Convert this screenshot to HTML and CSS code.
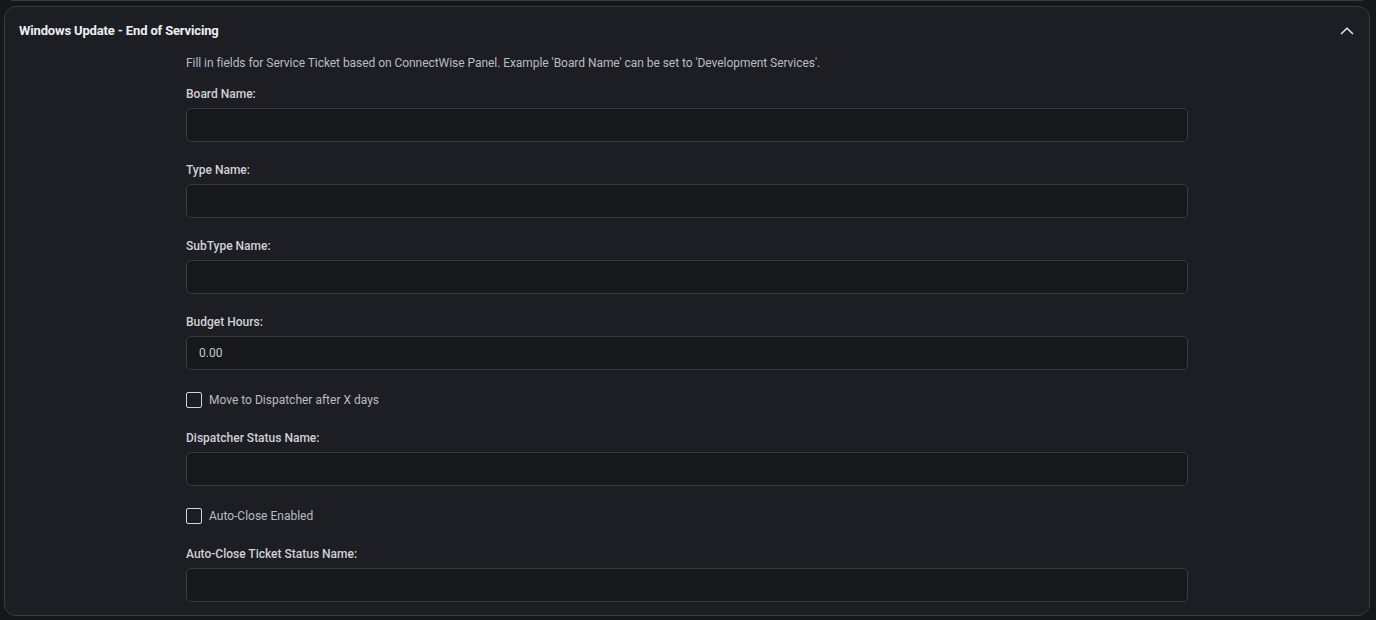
FILE: index.html
```html
<!DOCTYPE html>
<html lang="en">
<head>
    <meta charset="UTF-8">
    <meta name="viewport" content="width=device-width, initial-scale=1.0">
    <title>Windows Update - End of Servicing</title>
    <link rel="stylesheet" href="styles.css">
</head>
<body>
    <div class="panel panel-prev"></div>

    <div class="panel">
        <div class="panel-header">
            <span class="panel-title">Windows Update - End of Servicing</span>
            <svg class="chevron" width="14" height="8" viewBox="0 0 14 8">
                <path d="M1 7 L7 1.2 L13 7" fill="none" stroke="#e6ecf5" stroke-width="1.5"/>
            </svg>
        </div>
        <div class="panel-body">
            <p class="hint">Fill in fields for Service Ticket based on ConnectWise Panel. Example 'Board Name' can be set to 'Development Services'.</p>

            <div class="field">
                <label class="field-label" for="board">Board Name:</label>
                <input type="text" id="board">
            </div>
            <div class="field">
                <label class="field-label" for="type">Type Name:</label>
                <input type="text" id="type">
            </div>
            <div class="field">
                <label class="field-label" for="subtype">SubType Name:</label>
                <input type="text" id="subtype">
            </div>
            <div class="field">
                <label class="field-label" for="hours">Budget Hours:</label>
                <input type="text" id="hours" value="0.00">
            </div>
            <div class="check-row">
                <input type="checkbox" id="dispatch">
                <label for="dispatch">Move to Dispatcher after X days</label>
            </div>
            <div class="field">
                <label class="field-label" for="dstatus">Dispatcher Status Name:</label>
                <input type="text" id="dstatus">
            </div>
            <div class="check-row">
                <input type="checkbox" id="autoclose">
                <label for="autoclose">Auto-Close Enabled</label>
            </div>
            <div class="field">
                <label class="field-label" for="cstatus">Auto-Close Ticket Status Name:</label>
                <input type="text" id="cstatus">
            </div>
        </div>
    </div>
</body>
</html>
```

FILE: styles.css
```css
body {
    margin: 0;
    padding: 0 6px 0 4px;
    font-family: 'Roboto', 'Liberation Sans', sans-serif;
    background-color: #16171b;
    color: #c4c6cc;
    overflow: hidden;
}

.panel {
    background: #1d1e23;
    border: 1px solid #3a3b41;
    border-radius: 12px;
    margin-top: 5px;
}

.panel-prev {
    height: 18px;
    margin-top: -19px;
}

.panel-header {
    display: flex;
    justify-content: space-between;
    align-items: center;
    padding: 15px 14px 15px 14px;
    height: 17px;
}

.panel-title {
    font-size: 13px;
    font-weight: 700;
    color: #eceef4;
    letter-spacing: -0.15px;
}

.chevron {
    margin-right: 1px;
}

.panel-body {
    width: 1002px;
    margin: 0 auto;
    padding-bottom: 13px;
}

.hint {
    margin: 1px 0 15px 0;
    font-size: 12px;
    line-height: 16px;
    color: #b9bcc3;
    letter-spacing: -0.05px;
}

.field {
    display: flex;
    flex-direction: column;
    margin-bottom: 20px;
}

.field:last-child {
    margin-bottom: 0;
}

.field-label {
    font-size: 12px;
    line-height: 16px;
    font-weight: 500;
    color: #cfd1d7;
    margin-bottom: 6px;
}

.field input[type="text"] {
    box-sizing: border-box;
    height: 34px;
    width: 100%;
    margin: 0;
    padding: 0 12px;
    background: #17181c;
    border: 1px solid #3b3c42;
    border-radius: 5px;
    color: #c8cad0;
    font-family: inherit;
    font-size: 12px;
    outline: none;
}

.check-row {
    display: flex;
    align-items: center;
    height: 20px;
    margin-bottom: 20px;
}

.check-row input[type="checkbox"] {
    appearance: none;
    box-sizing: border-box;
    width: 16px;
    height: 16px;
    margin: 0 7px 0 0;
    border: 1px solid #d2d4d9;
    border-radius: 2px;
    background: transparent;
}

.check-row label {
    font-size: 12px;
    color: #b9bcc3;
}
```
